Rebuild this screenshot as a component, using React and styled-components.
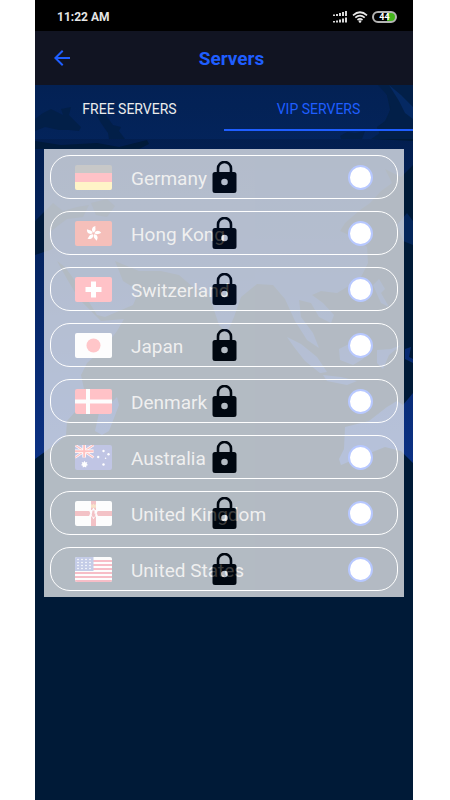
import React, { useState } from "react"
import styled, { createGlobalStyle } from "styled-components"
import { MdArrowBack } from "react-icons/md"

const SERVERS = [
  { id: "de", name: "Germany" },
  { id: "hk", name: "Hong Kong" },
  { id: "ch", name: "Switzerland" },
  { id: "jp", name: "Japan" },
  { id: "dk", name: "Denmark" },
  { id: "au", name: "Australia" },
  { id: "gb", name: "United Kingdom" },
  { id: "us", name: "United States" },
]

const STAR_COLUMNS = [3, 7, 11, 15]
const STAR_ROWS = [3, 6, 9, 12]
const PETALS = [0, 72, 144, 216, 288]

const flags = {
  de: (
    <>
      <rect width="37" height="25" fill="#464646" />
      <rect y="8" width="37" height="9" fill="#ff3344" />
      <rect y="17" width="37" height="8" fill="#ffda44" />
    </>
  ),
  hk: (
    <>
      <rect width="37" height="25" fill="#de2818" />
      {PETALS.map(angle => (
        <path
          key={angle}
          d="M18.5 11.6C15.6 10.400 15.600 6 19.400 4.800C19 6.600 21.400 8.800 18.500 11.600Z"
          fill="#fff"
          transform={`rotate(${angle + 8} 18.5 12.5)`}
        />
      ))}
    </>
  ),
  ch: (
    <>
      <rect width="37" height="25" fill="#ff3344" />
      <path d="M16 4.500h5v5.500h5.500v5H21v5.500h-5V15h-5.500v-5H16z" fill="#fff" />
    </>
  ),
  jp: (
    <>
      <rect width="37" height="25" fill="#fafafa" />
      <circle cx="18.5" cy="12.5" r="7" fill="#ff3f4a" />
    </>
  ),
  dk: (
    <>
      <rect width="37" height="25" fill="#ff3344" />
      <path d="M11 0h4v10.500h22v4H15V25h-4V14.500H0v-4h11z" fill="#fafafa" />
    </>
  ),
  au: (
    <>
      <rect width="37" height="25" fill="#2e3ca5" />
      <path d="M0 0l18.5 12.5M18.5 0L0 12.5" stroke="#fff" strokeWidth="2.6" />
      <path d="M0 0l18.5 12.5M18.5 0L0 12.5" stroke="#f33" strokeWidth="1.3" />
      <path d="M9.2 0v12.5M0 6.2h18.5" stroke="#fff" strokeWidth="3.6" />
      <path d="M9.2 0v12.5M0 6.2h18.5" stroke="#f33" strokeWidth="2" />
      <g fill="#fff">
        <path d="M9.5 15.800l.9 1.700 1.900-.4-.6 1.800 1.400 1.200-1.800.6-.1 1.900-1.700-.9-1.700.9-.1-1.900-1.800-.6 1.400-1.200-.6-1.800 1.900.4z" />
        <circle cx="28.5" cy="6" r="1.2" />
        <circle cx="23.2" cy="12" r="1.2" />
        <circle cx="33.5" cy="9.2" r="1.2" />
        <circle cx="30.6" cy="13.3" r=".8" />
        <circle cx="28.5" cy="19.5" r="1.2" />
      </g>
    </>
  ),
  gb: (
    <>
      <rect width="37" height="25" fill="#fafafa" />
      <path d="M16 0h5v10h16v5H21v10h-5V15H0v-5h16z" fill="#d8333f" />
      <path
        d="M18.5 6.500l1.500 2.500 3.200-.1-1.500 3.300 1.500 3.300-3-.1-1.700 2.800-1.700-2.800-3 .1 1.500-3.300-1.500-3.300 3.200.1z"
        fill="#fafafa"
      />
      <path d="M17.5 9.5h2v3.500l.8-.8v2.600l-1 1.400h-1.600l-1-2.200z" fill="#d8333f" />
      <path d="M16 6.800V3l1.300 1 1.200-1.500 1.200 1.500L21 3v3.800z" fill="#e8a34c" />
    </>
  ),
  us: (
    <>
      <rect width="37" height="25" fill="#fafafa" />
      {[3, 7, 11, 15, 19, 23].map(y => (
        <rect key={y} y={y} width="37" height="2" fill="#e52444" />
      ))}
      <rect width="18.500" height="14" fill="#3b56b0" />
      {STAR_ROWS.map(y =>
        STAR_COLUMNS.map(x => (
          <circle key={`${x}-${y}`} cx={x} cy={y - 0.5} r=".8" fill="#fff" />
        ))
      )}
    </>
  ),
}

const WorldMap = () => (
  <MapDrawing viewBox="0 0 378 400" aria-hidden="true">
    <defs>
      <linearGradient id="land" gradientUnits="userSpaceOnUse" x1="0" y1="0" x2="0" y2="378">
        <stop offset="0" stopColor="#021c48" />
        <stop offset=".35" stopColor="#03225a" />
        <stop offset="1" stopColor="#0b3184" />
      </linearGradient>
    </defs>
    <path
      fill="url(#land)"
      d="M0 0H345L352 10L355 25L350 36L342 42L345 50L338 54L378 56V80L366 92L350 84
      L357 98L346 106L335 118L325 125L310 138L305 146L318 152L332 162L333 178L326 192
      L312 202L302 208L286 206L277 210L288 218L299 230L296 238L284 232L276 218L264 215
      L266 232L278 248L284 263L272 255L260 236L250 214L238 200L222 199L206 212L199 232
      L192 248L184 240L174 210L158 202L144 190L126 186L104 186L80 176L88 196L104 206
      L98 220L70 232L62 230L46 204L30 182L22 176L32 194L44 214L56 226L66 236L89 234
      L82 246L70 262L52 278L46 290L49 304L46 320L32 336L31 350L22 358L0 374Z"
    />
    <path fill="url(#land)" d="M82 312L76 318L64 328L60 346L67 350L74 346L84 320Z" />
    <path fill="url(#land)" d="M252 252L266 259L282 272L292 287L285 288L270 276L259 262Z" />
    <path fill="url(#land)" d="M304 264L314 259L326 250L336 258L328 274L318 280L305 275Z" />
    <path fill="url(#land)" d="M288 290L306 292L322 296L312 300L292 296Z" />
    <path fill="url(#land)" d="M342 265L356 264L366 260L354 270L348 284L342 278Z" />
    <path fill="url(#land)" d="M338 200L344 194L350 204L346 208L354 222L346 218Z" />
    <path fill="url(#land)" d="M370 264L376 262L374 272L378 274V278L370 274Z" />
    <path fill="url(#land)" d="M310 342L334 336L352 322L362 316L368 320L378 308V378L366 366
      L350 362L330 370L306 380L304 374L309 364Z" />
    <g fill="#001a3a">
      <path d="M0 34L8 28L16 24L28 30L26 24L36 22L34 30L46 42L44 46L34 45L24 45L10 42L0 46Z" />
      <path d="M61 29H70L78 40L86 42L84 46L90 54H74L73 48L66 38Z" />
      <path d="M0 56L26 60L62 58L84 62L112 55L114 59L104 64H0Z" />
      <path d="M343 0H378V54H336L345 48L342 42L352 36L356 22L352 10Z" />
      <path d="M305 51L312 47L320 48L330 46L327 54H306Z" />
      <path d="M0 136L12 124L18 118L28 126L42 122L54 120L48 132L32 134L24 140L14 148L18 164L0 170Z" />
      <path d="M56 118L72 114L80 121L72 132L61 130Z" />
    </g>
    <path fill="#04265a" d="M354 0L366 10L378 22V34L370 28L364 16Z" />
    <path fill="#04265a" d="M362 140L372 128L378 136V160L368 156Z" />
  </MapDrawing>
)

const SignalIcon = () => (
  <svg width="16" height="12" viewBox="0 0 16 12" fill="#d8d8d8" aria-hidden="true">
    <path d="M1 3.500h2V5H1zM4 3h2v2H4zM7 2h2v3H7zM10 1h2v4h-2zM13 0h2v5h-2z" />
    <path d="M1 10h2v1.500H1zM4 9.500h2v2H4zM7 8.500h2v3H7zM10 7.500h2v4h-2zM13 6.500h2v5h-2z" />
  </svg>
)

const WifiIcon = () => (
  <svg width="16" height="12" viewBox="0 0 16 12" fill="none" stroke="#e8e8e8" strokeWidth="1.700" aria-hidden="true">
    <path d="M1 4.300Q8-1.800 15 4.300M3.300 6.700Q8 2.600 12.700 6.700M5.500 9Q8 6.900 10.500 9" />
    <circle cx="8" cy="10.500" r="1.300" fill="#e8e8e8" stroke="none" />
  </svg>
)

const LockIcon = () => (
  <svg width="25" height="33" viewBox="0 0 25 33" aria-hidden="true">
    <path
      d="M6 12V7.500a6.500 6.500 0 0 1 13 0V12"
      fill="none"
      stroke="#000"
      strokeWidth="2.600"
    />
    <path
      fillRule="evenodd"
      d="M3 11H22a2.500 2.500 0 0 1 2.500 2.500V29.500a2.500 2.500 0 0 1-2.500 2.500H3A2.500 2.500 0 0 1 .5 29.500V13.500A2.500 2.500 0 0 1 3 11ZM12.500 17.700a3.300 3.300 0 1 0 0 6.600 3.300 3.300 0 1 0 0-6.600Z"
    />
  </svg>
)

const ServerRow = ({ server, checked, onSelect }) => (
  <Row>
    <Pill htmlFor={server.id}>
      <Flag viewBox="0 0 37 25" aria-hidden="true">
        {flags[server.id]}
      </Flag>
      <ServerName>{server.name}</ServerName>
      <Radio
        type="radio"
        name="server"
        id={server.id}
        checked={checked}
        onChange={() => onSelect(server.id)}
      />
    </Pill>
    <LockedCover>
      <LockIcon />
    </LockedCover>
  </Row>
)

const App = () => {
  const [tab, setTab] = useState("vip")
  const [selected, setSelected] = useState(null)

  return (
    <>
      <GlobalStyle />
      <Phone>
        <StatusBar>
          <Clock>11:22 AM</Clock>
          <SignalIcon />
          <WifiIcon />
          <Battery>44</Battery>
        </StatusBar>
        <Header>
          <BackButton type="button" aria-label="Back">
            <MdArrowBack />
          </BackButton>
          <Title>Servers</Title>
        </Header>
        <Content>
          <WorldMap />
          <Tabs role="tablist">
            <Tab
              type="button"
              role="tab"
              aria-selected={tab === "free"}
              $active={tab === "free"}
              onClick={() => setTab("free")}
            >
              FREE SERVERS
            </Tab>
            <Tab
              type="button"
              role="tab"
              aria-selected={tab === "vip"}
              $active={tab === "vip"}
              onClick={() => setTab("vip")}
            >
              VIP SERVERS
            </Tab>
          </Tabs>
          <ServerList>
            {SERVERS.map(server => (
              <ServerRow
                key={server.id}
                server={server}
                checked={selected === server.id}
                onSelect={setSelected}
              />
            ))}
          </ServerList>
        </Content>
      </Phone>
    </>
  )
}

const GlobalStyle = createGlobalStyle`
  * {
    box-sizing: border-box;
  }

  body {
    margin: 0;
    background: #fff;
    font-family: Roboto, "Liberation Sans", sans-serif;
  }

  svg {
    display: block;
    flex-shrink: 0;
  }
`

const Phone = styled.div`
  display: flex;
  flex-direction: column;
  min-height: 100vh;
  margin: 0 37px 0 35px;
  background: #001a37;
`

const StatusBar = styled.div`
  display: flex;
  align-items: center;
  gap: 4px;
  height: 31px;
  padding: 2px 16px 0 22px;
  background: #000;
`

const Clock = styled.span`
  flex: 1;
  color: #e6e6e6;
  font-size: 12px;
  font-weight: 700;
`

const Battery = styled.span`
  width: 25px;
  height: 12px;
  border: 2px solid #b4b4b4;
  border-radius: 6px;
  background: linear-gradient(90deg, #000 60%, #43b51c 60%);
  color: #fff;
  font-size: 9px;
  font-weight: 700;
  line-height: 8px;
  text-align: center;
`

const Header = styled.header`
  display: flex;
  align-items: center;
  gap: 4px;
  height: 54px;
  padding: 0 28px 0 15px;
  background: #111422;
  color: #1f5eff;
`

const BackButton = styled.button`
  padding: 0;
  border: 0;
  background: none;
  color: inherit;
  font-size: 24px;
  cursor: pointer;
`

const Title = styled.h1`
  flex: 1;
  margin: 0;
  padding-top: 2px;
  font-size: 19px;
  font-weight: 700;
  line-height: 24px;
  text-align: center;
`

const Content = styled.main`
  position: relative;
  flex: 1;
`

const MapDrawing = styled.svg`
  position: absolute;
  top: 0;
  left: 0;
  width: 100%;
`

const Tabs = styled.div`
  position: relative;
  display: flex;
  height: 54px;
  align-items: flex-start;
  background: rgba(10, 60, 150, 0.16);
`

const Tab = styled.button`
  flex: 1;
  height: 46px;
  padding: 2px 0 0;
  border: 0;
  background: none;
  box-shadow: ${({ $active }) => ($active ? "inset 0 -2px #1f5eff" : "none")};
  color: ${({ $active }) => ($active ? "#1f5eff" : "#ececec")};
  font-family: inherit;
  font-size: 14px;
  cursor: pointer;
`

const ServerList = styled.ul`
  position: relative;
  margin: 10px 9px;
  padding: 0;
  list-style: none;
`

const Row = styled.li`
  position: relative;
  padding: 6px;
`

const Pill = styled.label`
  display: flex;
  align-items: center;
  gap: 19px;
  height: 44px;
  padding: 0 24px;
  border: 1px solid #fff;
  border-radius: 20px;
`

const Flag = styled.svg`
  width: 37px;
  height: 25px;
  border-radius: 2px;
`

const ServerName = styled.span`
  flex: 1;
  padding-top: 3px;
  color: #ccc;
  font-size: 19px;
  line-height: 24px;
`

const Radio = styled.input`
  appearance: none;
  width: 25px;
  height: 25px;
  margin: 0;
  border: 2px solid #0f46ff;
  border-radius: 50%;
  background: #fff;
`

const LockedCover = styled.div`
  position: absolute;
  inset: 0;
  display: flex;
  align-items: center;
  justify-content: center;
  background: #fff;
  opacity: 0.7;
`

export default App
